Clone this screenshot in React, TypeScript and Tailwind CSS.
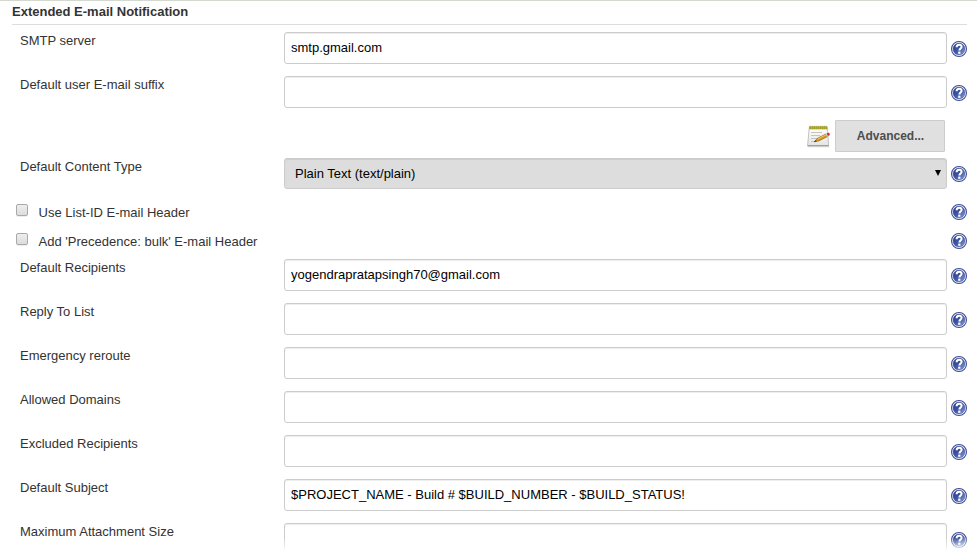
import React from "react";

function HelpIcon({ className = "" }: { className?: string }) {
  return (
    <svg className={`h-4 w-4 shrink-0 ${className}`} viewBox="0 0 16 16" role="img" aria-label="Help">
      <defs>
        <linearGradient id="helpFill" x1="0" y1="0" x2="1" y2="1">
          <stop offset="0" stopColor="#26378a" />
          <stop offset="0.5" stopColor="#3f57a6" />
          <stop offset="1" stopColor="#8aa3d6" />
        </linearGradient>
      </defs>
      <circle cx="8" cy="8" r="7.45" fill="#fff" stroke="#3c4a98" strokeWidth="1.1" />
      <circle cx="8" cy="8" r="6" fill="url(#helpFill)" stroke="#34468f" strokeWidth="0.4" />
      <path
        d="M5.6 6.2C5.6 4.4 6.7 3.7 8.1 3.7s2.5.7 2.5 2.1c0 1.7-2.2 1.8-2.2 3.8"
        fill="none"
        stroke="#fff"
        strokeWidth="2"
      />
      <rect x="7.2" y="10.6" width="2.2" height="2.2" fill="#fff" />
    </svg>
  );
}

function NotepadIcon() {
  return (
    <svg className="h-6 w-6 shrink-0" viewBox="0 0 24 24" aria-hidden="true">
      <defs>
        <linearGradient id="paper" x1="0" y1="0" x2="0" y2="1">
          <stop offset="0" stopColor="#ffffff" />
          <stop offset="1" stopColor="#e4e4e2" />
        </linearGradient>
      </defs>
      <path d="M0.6 22h21.8v1.3H0.6z" fill="#dededc" />
      <path d="M2.3 3h17.9l1.5 18.6H.6z" fill="url(#paper)" stroke="#b4b5b1" strokeWidth="0.8" />
      <path d="M.6 21.7h21.2" stroke="#92938f" strokeWidth="0.9" />
      <path d="M2 2.4h18.4v2.9H2z" fill="#bab834" />
      <path d="M3.2 1.8v3.4M5.2 1.8v3.4M7.2 1.8v3.4M9.2 1.8v3.4M11.2 1.8v3.4M13.2 1.8v3.4M15.2 1.8v3.4M17.2 1.8v3.4M19.2 1.8v3.4" stroke="#8b8a18" strokeWidth="0.7" />
      <path d="M4 8.5h11M4 11.5h9M4 14.5h6M4 17.5h3" stroke="#c4c4c4" strokeWidth="1" />
      <path d="M7.2 17.8l3.4-3.6 8.3-4.2 1.5 2.6-8.4 4.2z" fill="#d99a25" stroke="#8a6216" strokeWidth="0.7" />
      <path d="M10.8 14.9l8.3-4.2" stroke="#f6cf63" strokeWidth="0.8" />
      <path d="M6.8 18.1l2.1-1.9.8 1.3z" fill="#333" />
      <path d="M18.4 10.2l1.3-.6 1.5 2.5-1.3.6z" fill="#c9cbc7" />
      <path d="M19.6 9.5l1.5-.8c1.3-.3 2.3 1.6 1.4 2.5l-1.5.8z" fill="#e5252b" />
    </svg>
  );
}

function Field({ label, value = "" }: { label: string; value?: string }) {
  return (
    <label className="flex h-11 shrink-0 items-start pl-5">
      <span className="w-[264px] shrink-0 pt-px">{label}</span>
      <input
        type="text"
        defaultValue={value}
        className="h-8 w-[663px] shrink-0 rounded-[3px] border border-[#ccc] bg-white px-1.5 pb-px text-[13px] text-black shadow-[inset_0_1px_1px_rgba(0,0,0,0.075)] outline-none"
      />
      <HelpIcon className="mt-[9px] ml-1" />
    </label>
  );
}

function CheckField({ label }: { label: string }) {
  return (
    <label className="flex h-[29px] shrink-0 items-start pl-4">
      <input
        type="checkbox"
        className="h-3 w-3 shrink-0 appearance-none rounded-[2px] border border-[#a9a9a9] bg-linear-to-b from-[#eeeeee] to-[#dcdcdc] shadow-[0_1px_0_#eeeeee]"
      />
      <span className="ml-[10.6px] w-[912.4px] shrink-0 pt-px">{label}</span>
      <HelpIcon />
    </label>
  );
}

export default function App() {
  return (
    <main className="relative flex h-[557px] w-[977px] flex-col overflow-hidden border-t border-[#d3d9cf] bg-white font-['Liberation_Sans',Arial,sans-serif] text-[13px] leading-[15px] text-[#333]">
      <h1 className="mr-2.5 ml-3 h-6 shrink-0 border-b border-[#ddd] pt-[3px] font-bold">
        Extended E-mail Notification
      </h1>
      <div className="flex flex-col pt-[7px]">
        <Field label="SMTP server" value="smtp.gmail.com" />
        <Field label="Default user E-mail suffix" />
        <div className="flex h-[38px] shrink-0 items-start justify-end pr-8">
          <div className="mt-1 mr-1">
            <NotepadIcon />
          </div>
          <button
            type="button"
            className="h-8 w-[110px] rounded-[1px] border border-[#ccc] bg-[#e0e0e0] pl-px text-[12px] font-bold text-[#4d4d4d]"
          >
            Advanced...
          </button>
        </div>
        <div className="flex h-[46px] shrink-0 items-start pl-5">
          <span className="w-[264px] shrink-0 pt-px">Default Content Type</span>
          <div className="flex h-[31px] w-[663px] shrink-0 items-center justify-between rounded-[3px] border border-[#ccc] bg-[#ddd] pr-[5px] pl-2.5 text-black shadow-[inset_0_1px_1px_rgba(0,0,0,0.075)]">
            <span>Plain Text (text/plain)</span>
            <svg className="mb-0.5 h-[6px] w-[6px]" viewBox="0 0 6 6" aria-hidden="true">
              <path d="M0 0h6L3 6z" fill="#000" />
            </svg>
          </div>
          <HelpIcon className="mt-2 ml-1" />
        </div>
        <CheckField label="Use List-ID E-mail Header" />
        <CheckField label="Add 'Precedence: bulk' E-mail Header" />
        <div className="-mt-[3px] flex flex-col">
          <Field label="Default Recipients" value="yogendrapratapsingh70@gmail.com" />
          <Field label="Reply To List" />
          <Field label="Emergency reroute" />
          <Field label="Allowed Domains" />
          <Field label="Excluded Recipients" />
          <Field label="Default Subject" value="$PROJECT_NAME - Build # $BUILD_NUMBER - $BUILD_STATUS!" />
          <Field label="Maximum Attachment Size" />
        </div>
      </div>
      <div className="pointer-events-none absolute inset-x-0 bottom-0 h-5 bg-linear-to-b from-white/0 to-white to-[75%]" />
    </main>
  );
}
